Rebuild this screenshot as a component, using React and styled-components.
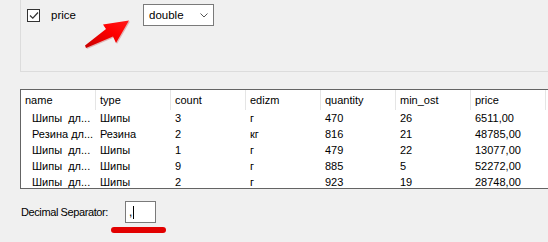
import React from 'react'
import styled, { createGlobalStyle } from 'styled-components'

const GlobalStyle = createGlobalStyle`
  html, body {
    margin: 0;
    padding: 0;
    background: #f0f0f0;
  }
  body {
    font-family: 'Liberation Sans', Arial, sans-serif;
    font-size: 11px;
    color: #000;
  }
`

const Page = styled.div`
  position: relative;
  width: 548px;
  height: 242px;
  overflow: hidden;
  background: #f0f0f0;
`

const GroupBox = styled.div`
  margin-left: 20px;
  margin-right: -20px;
  height: 71px;
  border-left: 1px solid #dcdcdc;
  border-bottom: 1px solid #dcdcdc;
`

const OptionRow = styled.div`
  display: flex;
  align-items: center;
  padding: 4px 0 0 6px;
`

const CheckBox = styled.div`
  width: 11px;
  height: 11px;
  border: 1px solid #333;
  background: #fff;
  display: flex;
  align-items: center;
  justify-content: center;
`

const FieldName = styled.span`
  width: 92px;
  margin-left: 11px;
  font-size: 11.5px;
`

const Combo = styled.div`
  box-sizing: border-box;
  width: 71px;
  height: 22px;
  border: 1px solid #7a7a7a;
  background: #fff;
  display: flex;
  align-items: center;
  justify-content: space-between;
  padding: 0 5px 0 5px;
  font-size: 11.5px;
`

const Arrow = styled.svg`
  position: absolute;
  left: 80px;
  top: 16px;
`

const Grid = styled.div`
  margin: 17px -20px 0 20px;
  height: 98px;
  border: 1px solid #646464;
  border-right: none;
  background: #fff;
  overflow: hidden;
`

const Row = styled.div`
  display: flex;
  height: ${p => (p.$header ? 20 : 16)}px;
  align-items: center;
`

const Cell = styled.div`
  box-sizing: border-box;
  flex: 0 0 75px;
  height: 100%;
  display: flex;
  align-items: center;
  padding-left: ${p => (p.$indent ? 11 : 4)}px;
  border-right: 1px solid ${p => (p.$header ? '#e5e5e5' : 'transparent')};
  white-space: pre;
  overflow: hidden;
`

const DecimalRow = styled.div`
  position: relative;
  display: flex;
  align-items: center;
  margin-top: 12px;
  padding-left: 21px;
`

const Label = styled.span`
  width: 104px;
  font-size: 11px;
  letter-spacing: -0.4px;
`

const SmallInput = styled.div`
  box-sizing: border-box;
  width: 31px;
  height: 22px;
  border: 1px solid #7a7a7a;
  background: #fff;
  display: flex;
  align-items: center;
  padding-left: 3px;
  font-size: 12px;
`

const Caret = styled.span`
  display: inline-block;
  width: 1px;
  height: 13px;
  margin-left: 1px;
  background: #000;
`

const RedMark = styled.div`
  position: absolute;
  left: 111px;
  top: 26px;
  width: 55px;
  height: 6px;
  border-radius: 3px;
  background: #e20000;
`

const columns = ['name', 'type', 'count', 'edizm', 'quantity', 'min_ost', 'price']

const rows = [
  ['Шипы  дл...', 'Шипы', '3', 'г', '470', '26', '6511,00'],
  ['Резина дл...', 'Резина', '2', 'кг', '816', '21', '48785,00'],
  ['Шипы  дл...', 'Шипы', '1', 'г', '479', '22', '13077,00'],
  ['Шипы  дл...', 'Шипы', '9', 'г', '885', '5', '52272,00'],
  ['Шипы  дл...', 'Шипы', '2', 'г', '923', '19', '28748,00'],
]

const arrowPoints = '86,48 85,45.5 106,29 103,24.5 129,20.5 116,43 113,36.5'

export default function App() {
  return (
    <Page>
      <GlobalStyle />
      <GroupBox>
        <OptionRow>
          <CheckBox>
            <svg width="10" height="9" viewBox="0 0 10 9">
              <path d="M1 4.5 L3.8 7.2 L9 1.5" fill="none" stroke="#333" strokeWidth="1.2" />
            </svg>
          </CheckBox>
          <FieldName>price</FieldName>
          <Combo>
            <span>double</span>
            <svg width="8" height="5" viewBox="0 0 8 5">
              <path d="M0.5 0.5 L4 4 L7.5 0.5" fill="none" stroke="#555" strokeWidth="1" />
            </svg>
          </Combo>
        </OptionRow>
      </GroupBox>

      <Arrow width="54" height="36" viewBox="80 16 54 36">
        <defs>
          <linearGradient id="ar" x1="0" y1="1" x2="1" y2="0">
            <stop offset="0" stopColor="#c80000" />
            <stop offset="0.6" stopColor="#ff0000" />
            <stop offset="1" stopColor="#ff1a1a" />
          </linearGradient>
        </defs>
        <polygon points={arrowPoints} fill="#b00000" opacity="0.25" transform="translate(1,1)" />
        <polygon points={arrowPoints} fill="url(#ar)" />
      </Arrow>

      <Grid>
        <Row $header>
          {columns.map(c => (
            <Cell key={c} $header>{c}</Cell>
          ))}
        </Row>
        {rows.map((r, i) => (
          <Row key={i}>
            {r.map((v, j) => (
              <Cell key={j} $indent={j === 0}>{v}</Cell>
            ))}
          </Row>
        ))}
      </Grid>

      <DecimalRow>
        <Label>Decimal Separator:</Label>
        <SmallInput>
          ,<Caret />
        </SmallInput>
        <RedMark />
      </DecimalRow>
    </Page>
  )
}
